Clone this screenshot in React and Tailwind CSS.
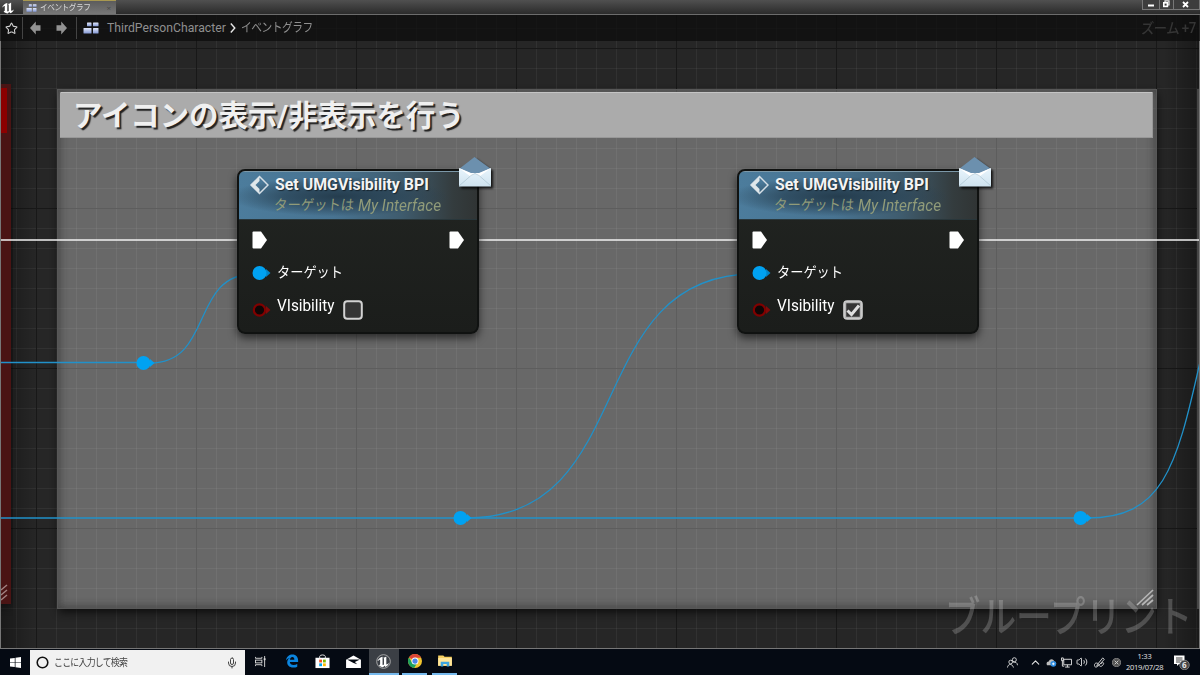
import { ChevronUp, Mic, Star, Volume2 } from 'lucide-react';

const NODES = [
  { id: 'hide', left: 237, top: 155, checked: false },
  { id: 'show', left: 737, top: 155, checked: true },
];

const KNOTS = [
  { x: 143, y: 363 },
  { x: 460, y: 518 },
  { x: 1080, y: 518 },
];

const UnrealLogo = ({ className, ring }) => (
  <svg viewBox={ring ? '0 0 16 16' : '1 2 13.500 12.500'} className={className} fill="none">
    {ring && <circle cx="8" cy="8" r="7.300" stroke="#b8b8b8" strokeWidth="0.900" />}
    <path
      d="M1.500 7.800C2.600 5.200 4.600 3.500 7 3v8.100c0 .8.800.9 1.500.2V5.100c0-.6-.3-.9-.8-1.100 1.400-.2 2.400-.6 3.300-1.400v8c0 .8.900.8 2.800-.9-.7 2.200-2 3.400-3.700 4.100L9 12.500 7.600 14C5.500 14 4 13.100 3.100 11.700c.9.1 1.300-.3 1.300-1V6.500c0-.8-1-.5-2.900 1.300z"
      fill="#fff"
    />
  </svg>
);

const GraphIcon = ({ className }) => (
  <svg viewBox="0 0 16 12" className={className}>
    <defs>
      <linearGradient id="graphIcon" x1="0" y1="0" x2="0" y2="1">
        <stop offset="0" stopColor="#e2e8fa" />
        <stop offset="1" stopColor="#8398d4" />
      </linearGradient>
    </defs>
    <g fill="url(#graphIcon)">
      <rect x="4" y="0.500" width="4.500" height="3.800" rx="0.500" />
      <rect x="10" y="0.500" width="5.500" height="3.800" rx="0.500" />
      <rect x="0.500" y="6" width="8" height="5.500" rx="0.500" />
      <rect x="10" y="6" width="5.500" height="5.500" rx="0.500" />
    </g>
  </svg>
);

const ArrowIcon = ({ className }) => (
  <svg viewBox="0 0 11 14" className={className}>
    <path d="M0 7L5.800 0.500V4.200H10.500V9.800H5.800V13.500z" fill="#929292" />
  </svg>
);

const TitleBar = () => (
  <div className="flex h-[14px] shrink-0 items-stretch justify-between bg-linear-to-b from-[#505050] to-[#2b2b2b]">
    <div className="flex">
      <div className="w-[23px] pt-[2px] pl-px">
        <UnrealLogo className="h-[12px] w-[14px]" />
      </div>
      <div className="flex w-[93px] items-center border-t border-[#a89850] bg-linear-to-b from-[#5c5c5c] to-[#777] pr-[5px] pl-[3px]">
        <GraphIcon className="h-[8px] w-[11px]" />
        <span className="ml-[3px] origin-left scale-x-90 text-[8.500px] leading-none tracking-[-0.500px] whitespace-nowrap text-[#d8d8d8]">イベントグラフ</span>
        <span className="ml-auto text-[8px] leading-none text-[#454545]">×</span>
      </div>
    </div>
    <div className="flex h-[10px] w-[58px] border-b border-l border-[#777] bg-[#3d3d3d]">
      <svg viewBox="0 0 57 9" className="h-[9px] w-[57px]" fill="none">
        <path d="M16.500 0V9M30.500 0V9M56.500 0V9" stroke="#777" />
        <path d="M5 5.500H11" stroke="#fff" strokeWidth="2" />
        <path d="M22 2V0.800H26V5H25" stroke="#eee" strokeWidth="1.200" />
        <rect x="20.800" y="2.800" width="3.600" height="3.600" stroke="#fff" strokeWidth="1.600" />
        <path d="M40 2L45 7M45 2L40 7" stroke="#fff" strokeWidth="1.800" />
      </svg>
    </div>
  </div>
);

const Breadcrumb = () => (
  <div className="relative flex h-[27px] items-center border-t border-[#6c6c6c] bg-[#0c0c0c]/75 font-['Roboto','Noto_Sans_CJK_JP',sans-serif] text-[12px] text-[#8f8f8f]">
    <Star className="ml-[5px] h-[13px] w-[13px] text-[#d0d0d0]" strokeWidth={2} />
    <span className="ml-[4px] h-[22px] w-px bg-[#444]" />
    <ArrowIcon className="ml-[7px] h-[14px] w-[11px]" />
    <ArrowIcon className="ml-[15px] h-[14px] w-[11px] rotate-180" />
    <span className="ml-[9px] h-[22px] w-px bg-[#444]" />
    <GraphIcon className="ml-[6px] h-[12px] w-[16px]" />
    <span className="ml-[8px] w-[118px] text-[12.200px] whitespace-nowrap">ThirdPersonCharacter</span>
    <svg viewBox="0 0 6 10" className="ml-[5px] h-[10px] w-[6px]" fill="none">
      <path d="M0.800 0.500L4.800 5L0.800 9.500" stroke="#e8e8e8" strokeWidth="1.400" />
    </svg>
    <span className="ml-[5px] origin-left scale-x-[0.860] text-[12.500px] tracking-[-0.600px] whitespace-nowrap">イベントグラフ</span>
    <span className="mr-[4px] ml-auto origin-right scale-x-[0.950] text-[14px] font-medium tracking-[-0.500px] text-[#353535]">ズーム +7</span>
  </div>
);

const GraphBackground = () => (
  <svg viewBox="0 14 1200 635" className="absolute inset-0 h-[635px] w-[1200px]" fill="none">
    <defs>
      <pattern id="minor" x="16" y="8" width="20" height="20" patternUnits="userSpaceOnUse">
        <path d="M0.500 0V20M0 0.500H20" stroke="#fff" strokeOpacity="0.050" />
      </pattern>
      <pattern id="major" x="36" y="48" width="160" height="160" patternUnits="userSpaceOnUse">
        <path d="M0.500 0V160M0 0.500H160" stroke="#181818" />
      </pattern>
      <pattern id="majorSoft" x="36" y="48" width="160" height="160" patternUnits="userSpaceOnUse">
        <path d="M0.500 0V160M0 0.500H160" stroke="#5d5d5d" />
      </pattern>
      <linearGradient id="edge">
        <stop offset="0" stopColor="#000" stopOpacity="0.350" />
        <stop offset="0.030" stopColor="#000" stopOpacity="0" />
        <stop offset="0.970" stopColor="#000" stopOpacity="0" />
        <stop offset="1" stopColor="#000" stopOpacity="0.350" />
      </linearGradient>
      <filter id="soft" x="-5%" y="-5%" width="110%" height="110%">
        <feGaussianBlur stdDeviation="5" />
      </filter>
      <filter id="rim" x="-5%" y="-5%" width="110%" height="110%">
        <feGaussianBlur stdDeviation="4" />
      </filter>
      <clipPath id="commentClip">
        <rect x="57" y="89" width="1100" height="520" />
      </clipPath>
    </defs>
    <rect y="14" width="1200" height="635" fill="#262626" />
    <rect y="14" width="1200" height="635" fill="url(#minor)" />
    <rect y="14" width="1200" height="635" fill="url(#major)" />
    <rect y="14" width="1200" height="635" fill="url(#edge)" />

    {/* neighbouring comment boxes at both edges */}
    <rect x="-8" y="90" width="20" height="516" fill="#000" opacity="0.500" filter="url(#soft)" />
    <rect x="0" y="84" width="11" height="520" fill="#4a1414" />
    <rect x="0" y="88" width="7" height="45" fill="#8c0000" />
    <path d="M1 590L7 585M1 595L7 590M1 600L7 595" stroke="#a08080" strokeWidth="1.500" />
    <rect x="1197" y="89" width="3" height="520" fill="#464646" />

    <rect x="59" y="94" width="1098" height="518" fill="#000" opacity="0.700" filter="url(#soft)" />
    <rect x="57" y="89" width="1100" height="520" fill="#686868" />
    <rect x="57" y="89" width="1100" height="520" fill="url(#minor)" />
    <rect x="57" y="89" width="1100" height="520" fill="url(#majorSoft)" />
    <g clipPath="url(#commentClip)">
      <rect x="55" y="87" width="1104" height="524" stroke="#303030" strokeWidth="9" opacity="0.700" filter="url(#rim)" />
    </g>
    <rect x="57.500" y="89.500" width="1099" height="519" stroke="#575757" />
    <path d="M1137 605L1153 590M1142 605L1153 595M1147 605L1153 600" stroke="#b5b5b5" strokeWidth="1.700" />
    <rect x="60" y="92" width="1093" height="46" rx="1" fill="#ababab" />
    <path d="M61 92.500H1152" stroke="#c4c4c4" />
    <path d="M60 137.500H1153M1152.500 93V138" stroke="#989898" />

    <path d="M0 240H1200" stroke="#f2f2f2" strokeWidth="1.700" />
    <g stroke="#2191c9" strokeWidth="1.300">
      <path d="M0 362.500H143M0 518H1080" />
      <path d="M150 363C214 363 190 274 254 274" />
      <path d="M467 518C640 518 581 274 754 274" />
      <path d="M1087 518C1162 518 1176 470 1200 362" />
    </g>
    {KNOTS.map((knot) => (
      <g key={knot.x} fill="#00a2f2">
        <circle cx={knot.x + 0.500} cy={knot.y} r="7" />
        <path d={`M${knot.x + 7} ${knot.y - 4}L${knot.x + 11.500} ${knot.y}L${knot.x + 7} ${knot.y + 4}z`} />
      </g>
    ))}
    <path d="M0.500 14V649M1199.500 14V649M0 648.500H1200" stroke="#777" />
  </svg>
);

const ExecPin = () => (
  <svg viewBox="0 0 16 18" className="h-[18px] w-[16px]">
    <path d="M1.500 0.500H9L15 9L9 17.500H1.500Q0.500 17.500 0.500 16.500V1.500Q0.500 0.500 1.500 0.500z" fill="#fff" />
  </svg>
);

const DataPin = ({ hollow }) => (
  <svg viewBox="0 0 19 14" className="h-[14px] w-[19px] shrink-0">
    <path d="M14 3L18.500 7L14 11z" fill={hollow ? '#820a0a' : '#0084c8'} />
    {hollow ? (
      <circle cx="7.500" cy="7" r="5.700" fill="#100606" stroke="#800000" strokeWidth="2.200" />
    ) : (
      <circle cx="7.500" cy="7" r="7" fill="#00a2f2" />
    )}
  </svg>
);

const MessageBadge = () => (
  <svg viewBox="0 0 36 34" className="absolute -top-[13px] left-[220px] h-[34px] w-[36px] drop-shadow-[2px_2px_1px_rgba(0,0,0,0.8)]">
    <defs>
      <linearGradient id="mailBody" x1="0" y1="0" x2="0" y2="1">
        <stop offset="0" stopColor="#e9f5fc" />
        <stop offset="1" stopColor="#cfe3ef" />
      </linearGradient>
    </defs>
    <path d="M2 13L17.500 1L34 13L18 22z" fill="#6c90ae" />
    <path d="M2 12L14 17.500H22L34 12V30.500H2z" fill="url(#mailBody)" />
    <path d="M2 12L14 17H22L34 12L22.500 20.500L18 17.500L13.500 20.500z" fill="#fff" />
    <path d="M2 30L14 19.500L18 17.500L22 19.500L34 30" fill="none" stroke="#a9c2cf" strokeWidth="0.700" />
  </svg>
);

const BlueprintNode = ({ node }) => (
  <div
    className="absolute h-[179px] w-[242px]"
    style={{ left: node.left, top: node.top }}
  >
    <div className="h-[165px] overflow-hidden rounded-[8px] border-2 border-[#101211] bg-linear-to-b from-[#222522] to-[#1b1d1b] shadow-[0_4px_8px_rgba(0,0,0,0.6)]">
      <div className="flex h-[48px] gap-[4px] border-t border-[#7c98a8] bg-[radial-gradient(ellipse_110px_20px_at_42%_52%,#253d4e_0%,#253d4eaa_50%,transparent_100%),linear-gradient(90deg,#4c7c9c_0%,#487391_40%,#3f5c6e_68%,#343c3e_90%,#303434_100%)] pt-[3px] pl-[10px]">
        <svg viewBox="0 0 20 20" className="h-[20px] w-[20px] shrink-0" fill="none">
          <path d="M10.500 1.500L19 10L10.500 18.500L2 10z" stroke="#d5dfe5" strokeWidth="1.500" />
          <path d="M10.500 1.500L2 10L10.500 18.500V14L6.500 10L10.500 6z" fill="#dfe7ea" />
        </svg>
        <div className="whitespace-nowrap">
          <div className="pl-[2px] text-[15.900px] leading-[20px] font-bold text-[#f4f4f4] [text-shadow:1px_1px_1px_#0008]">Set UMGVisibility BPI</div>
          <div className="flex items-center pl-px leading-[21px] text-[#909b79]">
            <span className="w-[84px] origin-left scale-x-[0.920] -skew-x-6 text-[14.500px]">ターゲットは</span>
            <span className="origin-left scale-x-[0.960] text-[16px] italic">My Interface</span>
          </div>
        </div>
      </div>
      <div className="flex justify-between border-t border-[#30444f]/60 pt-[11px] pr-[12px] pl-[13px]">
        <ExecPin />
        <ExecPin />
      </div>
      <div className="mt-[14px] flex h-[20px] items-center pl-[13px] text-white">
        <DataPin />
        <span className="ml-[6px] origin-left scale-x-[0.930] text-[14.200px] whitespace-nowrap">ターゲット</span>
      </div>
      <div className="mt-[11px] flex h-[24px] items-center pl-[13px] text-white">
        <span className="mt-[8px] flex"><DataPin hollow /></span>
        <span className="ml-[6px] w-[58px] origin-left scale-x-[0.940] text-[16.300px] leading-[18px]">VIsibility</span>
        <svg viewBox="0 0 20 20" className="mt-[8px] ml-[7.500px] h-[20px] w-[20px]" fill="none">
          <rect x="1.200" y="1.200" width="17.600" height="17.600" rx="3" fill="#343434" stroke="#d2d2d2" strokeWidth="2" />
          {node.checked && (
            <>
              <rect x="2.500" y="2.500" width="15" height="15" stroke="#b5b5b5" strokeWidth="1.500" />
              <path d="M4.500 10.500L8.500 14.500L16 5.500" stroke="#dedede" strokeWidth="3" />
            </>
          )}
        </svg>
      </div>
    </div>
    <MessageBadge />
  </div>
);

const Graph = () => (
  <div className="relative h-[635px] overflow-hidden font-['Roboto','Noto_Sans_CJK_JP',sans-serif]">
    <GraphBackground />
    <h1 className="absolute top-[79px] left-[73px] text-[29.400px] leading-[46px] font-bold whitespace-nowrap text-[#f0f0f0] [text-shadow:2px_2px_1px_#222]">
      アイコンの表示/非表示を行う
    </h1>
    {NODES.map((node) => (
      <BlueprintNode key={node.id} node={node} />
    ))}
    <div className="absolute top-[575px] right-[8px] origin-right scale-x-[0.850] text-[42px] leading-[58px] font-medium whitespace-nowrap text-white/20">
      ブループリント
    </div>
    <Breadcrumb />
  </div>
);

const TaskButton = ({ active, running, children }) => (
  <div className={`flex w-[30.500px] items-center justify-center border-b-2 ${active ? 'bg-[#3b3f45]' : ''} ${running ? 'border-[#76b9ed]' : 'border-transparent'}`}>
    {children}
  </div>
);

const Taskbar = () => (
  <div className="flex h-[26px] shrink-0 items-stretch bg-[#050a13] text-white">
    <div className="flex w-[30px] items-center justify-center">
      <svg viewBox="0 0 12 12" className="h-[11px] w-[11px]" fill="#fff">
        <path d="M0 1.700L5.200 1V5.600H0zM6 0.900L12 0V5.600H6zM0 6.400H5.200V11L0 10.300zM6 6.400H12V12L6 11.100z" />
      </svg>
    </div>
    <div className="mt-px flex w-[215px] items-center bg-[#f1f1f1] pr-[7px] pl-[6px] text-[#444]">
      <svg viewBox="0 0 14 14" className="h-[13px] w-[13px]" fill="none">
        <circle cx="7" cy="7" r="5.700" stroke="#111" strokeWidth="1.700" />
      </svg>
      <span className="ml-[5px] origin-left scale-x-[0.850] text-[10.500px] tracking-[-0.900px] whitespace-nowrap">ここに入力して検索</span>
      <Mic className="ml-auto h-[12px] w-[12px]" strokeWidth={2} />
    </div>
    <TaskButton>
      <svg viewBox="0 0 12 12" className="h-[11px] w-[11px]" fill="none" stroke="#ddd">
        <path d="M0.500 1V2.500H7.500V1M0.500 11V9.500H7.500V11M10.500 0V12" />
        <rect x="0.500" y="4.500" width="7" height="3" />
        <path d="M9.500 3.500H11.500" strokeWidth="2" />
      </svg>
    </TaskButton>
    <span className="w-[1.500px]" />
    <TaskButton>
      <svg viewBox="0 0 16 16" className="h-[14px] w-[14px]">
        <path d="M1 7.500C2 2.500 5 0.500 8.500 0.500c4.300 0 6.500 3 6.500 7v1.700H5.500c.2 2.300 2 3.300 4.200 3.300 1.600 0 3-.4 4.300-1.200v3.200c-1.500.8-3 1-4.800 1-4 0-6.700-2.400-6.700-6 0-2.400 1.300-4.300 3.500-5.300-2.200.4-3.800 1.500-5 3.300zM5.700 6.500h5c0-2-.8-3-2.300-3S6 4.600 5.700 6.500z" fill="#0b85df" fillRule="evenodd" />
      </svg>
    </TaskButton>
    <TaskButton>
      <svg viewBox="0 0 16 16" className="h-[15px] w-[15px]">
        <path d="M0.500 4H15.500V15H0.500z" fill="#fff" />
        <path d="M5 5V2.500C5 0.500 11 0.500 11 2.500V5" fill="none" stroke="#eee" />
        <path d="M4.500 6H7.500V9H4.500z" fill="#f25022" />
        <path d="M8.500 6H11.500V9H8.500z" fill="#7fba00" />
        <path d="M4.500 10H7.500V13H4.500z" fill="#00a4ef" />
        <path d="M8.500 10H11.500V13H8.500z" fill="#ffb900" />
      </svg>
    </TaskButton>
    <TaskButton>
      <svg viewBox="0 0 16 14" className="h-[13px] w-[15px]">
        <path d="M0 5L8 0.500L16 5V14H0z" fill="#fff" />
        <path d="M1 4.800H15L9.500 7.500L12 10L8 8.500z" fill="#050a13" />
      </svg>
    </TaskButton>
    <TaskButton active running>
      <UnrealLogo ring className="h-[15px] w-[15px]" />
    </TaskButton>
    <span className="w-[3px]" />
    <div className="flex w-[25px] items-center justify-center border-b-2 border-[#76b9ed]">
      <svg viewBox="0 0 16 16" className="h-[14px] w-[14px]">
        <circle cx="8" cy="8" r="8" fill="#f1c52f" />
        <path d="M8 8L1.100 4A8 8 0 0 1 15 4.300H8z" fill="#dc4437" />
        <path d="M1.100 4A8 8 0 0 0 7 15.900L11 9.500L8 11.500L4.800 10z" fill="#1aa15f" />
        <circle cx="8" cy="8" r="4" fill="#fff" />
        <circle cx="8" cy="8" r="3" fill="#4a86e8" />
      </svg>
    </div>
    <span className="w-[5px]" />
    <div className="flex w-[25px] items-center justify-center border-b-2 border-[#76b9ed]">
      <svg viewBox="0 0 16 14" className="h-[12px] w-[14px]">
        <path d="M0 0.500H6L7.500 2H16V12.500H0z" fill="#f6cf61" />
        <path d="M0 3.500H16V12.500H0z" fill="#ffe69a" />
        <path d="M3 13.500V8H13V13.500H10V10.500H6V13.500z" fill="#3da5df" />
      </svg>
    </div>
    <div className="ml-auto flex items-center text-[#e5e5e5]">
      <svg viewBox="0 0 12 12" className="h-[11px] w-[11px]" fill="none" stroke="#dcdcdc">
        <circle cx="8" cy="3" r="2.200" />
        <circle cx="4" cy="5.500" r="2" />
        <path d="M0.500 11.500C1 7 6 7 7 11.500M7 6C9 5 11.200 6 11.500 9" />
      </svg>
      <ChevronUp className="ml-[11px] h-[13px] w-[13px]" />
      <svg viewBox="0 0 12 10" className="ml-[4px] h-[9px] w-[11px]">
        <path d="M1 8C-.5 5 2 3.500 3 4C4 0 9 1 9 4C11 4 12 6 10.500 8z" fill="#bdbdbd" />
        <circle cx="8" cy="6.500" r="3.200" fill="#2b8be0" />
        <path d="M6.500 6.500H9.500M8 5V8" stroke="#fff" />
      </svg>
      <svg viewBox="0 0 12 12" className="ml-[4px] h-[11px] w-[11px]" fill="none" stroke="#e5e5e5">
        <path d="M3 2.500H11.500V8.500H3zM7 8.500V11M4.500 11H9.500M0.500 1V4H2.500V1zM1.500 4V10H3.500" />
      </svg>
      <Volume2 className="ml-[4px] h-[12px] w-[12px]" strokeWidth={1.800} />
      <svg viewBox="0 0 12 12" className="ml-[6px] h-[11px] w-[11px]" fill="none" stroke="#dcdcdc">
        <path d="M3.500 8.500L9.500 1L11.200 2.500L5 9.500L3 10zM0.500 9C0.500 6 4 6 5 8C6 12 10 10 10.500 7C10.500 5.500 8.500 6 8 7.500M0.500 9C0.500 11.500 3 11.500 4 10" />
      </svg>
      <svg viewBox="0 0 10 10" className="ml-[7px] h-[9px] w-[9px]" fill="none">
        <circle cx="5" cy="5" r="4.500" fill="#555" stroke="#888" />
        <path d="M3 3L7 7M7 3L3 7" stroke="#d5d5d5" />
      </svg>
      <div className="ml-[5px] w-[37px] text-center text-[7.500px] leading-[11px] tracking-[-0.250px] whitespace-nowrap">
        <div>1:33</div>
        <div>2019/07/28</div>
      </div>
      <div className="relative mr-[10px] ml-[11px] h-[16px] w-[16px]">
        <svg viewBox="0 0 16 16" className="h-[16px] w-[16px]">
          <path d="M0 1.500H10.500V10H5L3 12V10H0z" fill="#fff" />
          <path d="M2 4H8.500M2 6H8.500M2 8H6" stroke="#111" strokeWidth="0.800" />
          <circle cx="10.500" cy="11" r="4.800" fill="#444" stroke="#999" strokeWidth="0.700" />
        </svg>
        <span className="absolute top-[7px] left-[8px] text-[8px] leading-[8px] font-bold">6</span>
      </div>
    </div>
  </div>
);

const App = () => (
  <div className="flex h-[675px] w-[1200px] flex-col overflow-hidden bg-[#262626] font-['Open_Sans','Noto_Sans_CJK_JP',sans-serif]">
    <TitleBar />
    <Graph />
    <Taskbar />
  </div>
);

export default App;
